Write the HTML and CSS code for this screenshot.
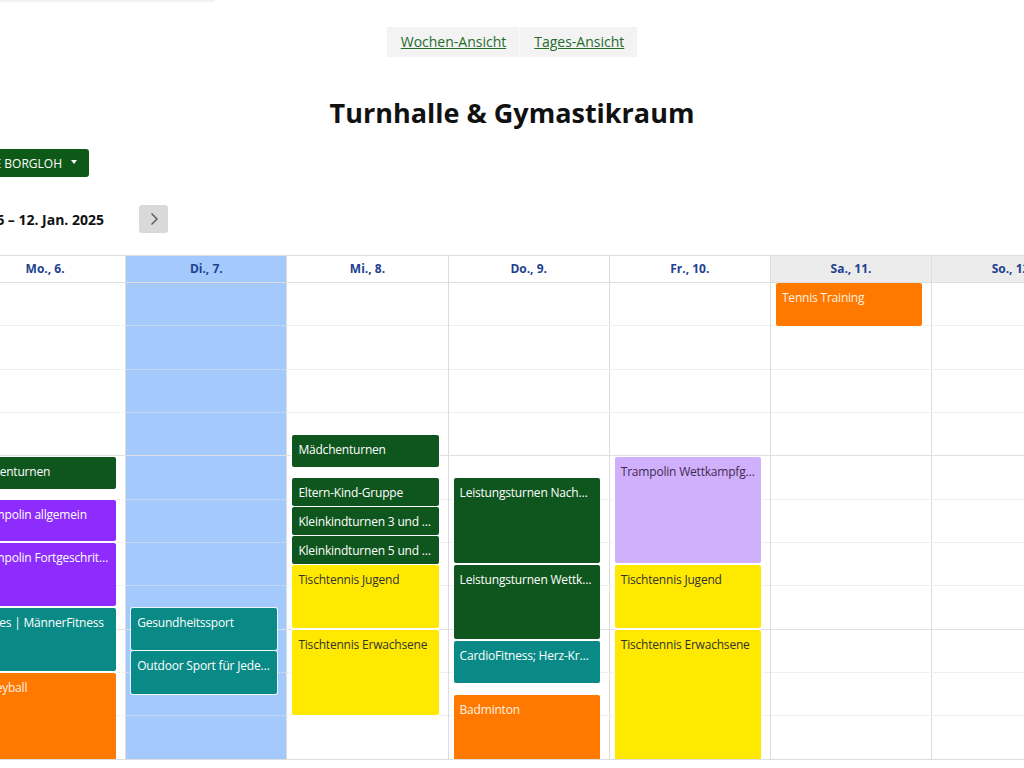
FILE: index.html
```html
<!DOCTYPE html>
<html lang="de">
<head>
<meta charset="utf-8">
<title>Turnhalle &amp; Gymastikraum</title>
<link rel="stylesheet" href="styles.css">
</head>
<body>
<div class="topline"></div>
<header class="head">
  <nav class="views">
    <a class="view-btn" href="#">Wochen-Ansicht</a>
    <a class="view-btn" href="#">Tages-Ansicht</a>
  </nav>
  <h1 class="title">Turnhalle &amp; Gymastikraum</h1>
</header>

<section class="cal">
  <div class="loc">
    <button class="loc-btn">GRUNDSCHULE BORGLOH <span class="caret"></span></button>
  </div>
  <div class="toolbar">
    <h2 class="range">6 – 12. Jan. 2025</h2>
    <button class="nav-btn" aria-label="Weiter">
      <svg width="12" height="14" viewBox="0 0 12 14"><path d="M3.5 1.5 L9 7 L3.5 12.5" fill="none" stroke="#555" stroke-width="1.4"/></svg>
    </button>
  </div>

  <div class="grid">
    <div class="head-row">
      <div class="axis"></div>
      <div class="dh">Mo., 6.</div>
      <div class="dh today">Di., 7.</div>
      <div class="dh">Mi., 8.</div>
      <div class="dh">Do., 9.</div>
      <div class="dh">Fr., 10.</div>
      <div class="dh weekend">Sa., 11.</div>
      <div class="dh weekend">So., 12.</div>
    </div>
    <div class="body">
      <div class="cols">
        <div class="axis"></div>
        <div class="day">
          <div class="ev green" style="top:174px;height:32px">Jungenturnen</div>
          <div class="ev purple" style="top:217px;height:41px">Trampolin allgemein</div>
          <div class="ev purple" style="top:260px;height:63px">Trampolin Fortgeschrittene</div>
          <div class="ev teal" style="top:325px;height:63px">Pilates | MännerFitness</div>
          <div class="ev orange" style="top:390px;height:120px">Volleyball</div>
        </div>
        <div class="day today">
          <div class="ev teal" style="top:325px;height:42px">Gesundheitssport</div>
          <div class="ev teal" style="top:368px;height:43px">Outdoor Sport für Jedermann</div>
        </div>
        <div class="day">
          <div class="ev green" style="top:152px;height:32px">Mädchenturnen</div>
          <div class="ev green" style="top:195px;height:28px">Eltern-Kind-Gruppe</div>
          <div class="ev green" style="top:224px;height:28px">Kleinkindturnen 3 und 4 Jahre</div>
          <div class="ev green" style="top:253px;height:28px">Kleinkindturnen 5 und 6 Jahre</div>
          <div class="ev yellow" style="top:282px;height:63px">Tischtennis Jugend</div>
          <div class="ev yellow" style="top:347px;height:85px">Tischtennis Erwachsene</div>
        </div>
        <div class="day">
          <div class="ev green" style="top:195px;height:85px">Leistungsturnen Nachwuchs</div>
          <div class="ev green" style="top:282px;height:74px">Leistungsturnen Wettkampf</div>
          <div class="ev teal" style="top:358px;height:42px">CardioFitness; Herz-Kreislauf</div>
          <div class="ev orange" style="top:412px;height:100px">Badminton</div>
        </div>
        <div class="day">
          <div class="ev lavender" style="top:174px;height:106px">Trampolin Wettkampfgruppe</div>
          <div class="ev yellow" style="top:282px;height:63px">Tischtennis Jugend</div>
          <div class="ev yellow" style="top:347px;height:130px">Tischtennis Erwachsene</div>
        </div>
        <div class="day">
          <div class="ev orange" style="top:0px;height:43px">Tennis Training</div>
        </div>
        <div class="day"></div>
      </div>
      <div class="slots">
        <div class="slot"></div><div class="slot"></div><div class="slot"></div><div class="slot"></div>
        <div class="slot"></div><div class="slot"></div><div class="slot"></div><div class="slot"></div>
        <div class="slot"></div><div class="slot"></div><div class="slot"></div><div class="slot"></div>
      </div>
    </div>
  </div>
</section>
</body>
</html>
```

FILE: styles.css
```css
html, body {
  margin: 0;
  padding: 0;
  overflow: hidden;
}
body {
  width: 1024px;
  height: 768px;
  background: #fff;
  font-family: "Open Sans", "Noto Sans", sans-serif;
  color: #111;
}
.topline {
  width: 215px;
  height: 2px;
  background: #f2f2f2;
}
.head {
  display: flex;
  flex-direction: column;
  align-items: center;
}
.views {
  display: flex;
  margin-top: 25px;
  background: #f3f3f3;
  height: 30px;
  align-items: center;
}
.view-btn {
  color: #256b2c;
  text-decoration: underline;
  font-size: 14px;
  padding: 0 13px 0 14px;
  line-height: 30px;
}
.view-btn + .view-btn {
  border-left: 1px solid #fafafa;
}
.title {
  margin: 38px 0 0;
  font-size: 27px;
  font-weight: 700;
  line-height: 36px;
  color: #111;
}
.cal {
  margin-left: -86px;
  width: 1200px;
}
.loc {
  width: 175px;
  display: flex;
  justify-content: flex-end;
  margin-top: 18px;
}
.loc-btn {
  background: #0d5a18;
  color: #fff;
  border: 0;
  border-radius: 3px;
  height: 28px;
  padding: 0 12px 0 10px;
  font-family: inherit;
  font-size: 12px;
  white-space: nowrap;
  display: flex;
  align-items: center;
  gap: 9px;
}
.caret {
  width: 0;
  height: 0;
  border-left: 3px solid transparent;
  border-right: 3px solid transparent;
  border-top: 4px solid #fff;
  margin-top: -2px;
}
.toolbar {
  display: flex;
  align-items: center;
  margin-top: 28px;
  height: 28px;
}
.range {
  width: 190px;
  margin: 0;
  text-align: right;
  font-size: 14px;
  font-weight: 700;
  white-space: nowrap;
  overflow: hidden;
}
.nav-btn {
  margin-left: 35px;
  width: 29px;
  height: 28px;
  border: 0;
  border-radius: 3px;
  background: #d9d9d9;
  display: flex;
  align-items: center;
  justify-content: center;
  padding: 0;
}
.grid {
  margin-top: 22px;
  border-top: 1px solid #ddd;
}
.head-row, .cols {
  display: grid;
  grid-template-columns: 50px repeat(7, 161.2px);
}
.dh {
  border-left: 1px solid #ddd;
  border-bottom: 1px solid #ddd;
  height: 26px;
  line-height: 26px;
  text-align: center;
  font-size: 12px;
  font-weight: 700;
  color: #21418f;
}
.dh.today { background: #a4c9fd; }
.dh.weekend { background: #ececec; }
.body {
  position: relative;
  height: 476px;
  overflow: hidden;
  border-bottom: 1px solid #ddd;
}
.cols { height: 100%; }
.day {
  border-left: 1px solid #ddd;
  position: relative;
}
.day.today { background: #a4c9fd; }
.slots {
  position: absolute;
  inset: 0;
  display: flex;
  flex-direction: column;
  pointer-events: none;
}
.slot {
  flex: 0 0 43.33px;
  box-sizing: border-box;
  border-bottom: 1px dotted #e2e2e2;
}
.slot:nth-child(4n) {
  border-bottom: 1px solid #e0e0e0;
}
.ev {
  position: absolute;
  left: 5px;
  right: 9px;
  z-index: 2;
  box-sizing: border-box;
  border-radius: 2px;
  box-shadow: 0 0 0 1px rgba(255,255,255,0.8);
  padding: 6px 6px 0;
  font-size: 12px;
  letter-spacing: -0.2px;
  line-height: 17px;
  color: #fff;
  white-space: nowrap;
  overflow: hidden;
  text-overflow: ellipsis;
}
.green { background: #0f561e; }
.purple { background: #8d2cfd; }
.teal { background: #098a86; }
.orange { background: #ff7800; color: #fff2e0; }
.yellow { background: #ffe900; color: #333; }
.lavender { background: #d0affd; color: #3d2c4e; }
```
